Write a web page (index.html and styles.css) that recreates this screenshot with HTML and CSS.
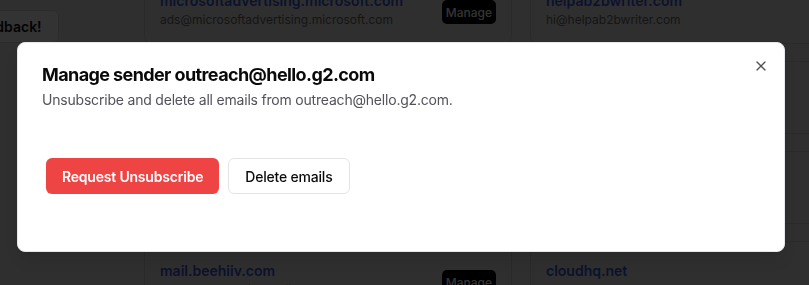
FILE: index.html
```html
<!DOCTYPE html>
<html lang="en">
<head>
<meta charset="utf-8">
<title>Manage sender</title>
<link rel="stylesheet" href="styles.css">
</head>
<body>
<div class="page">
  <button class="feedback">Feedback!</button>
  <div class="grid">
    <div class="card">
      <div class="info">
        <div class="domain">microsoftadvertising.microsoft.com</div>
        <div class="email">ads@microsoftadvertising.microsoft.com</div>
      </div>
      <button class="manage">Manage</button>
    </div>
    <div class="card">
      <div class="info">
        <div class="domain">helpab2bwriter.com</div>
        <div class="email">hi@helpab2bwriter.com</div>
      </div>
      <button class="manage">Manage</button>
    </div>
    <div class="card">
      <div class="info">
        <div class="domain">news.example.com</div>
        <div class="email">hello@news.example.com</div>
      </div>
      <button class="manage">Manage</button>
    </div>
    <div class="card">
      <div class="info">
        <div class="domain">updates.example.org</div>
        <div class="email">team@updates.example.org</div>
      </div>
      <button class="manage">Manage</button>
    </div>
    <div class="card">
      <div class="info">
        <div class="domain">hello.g2.com</div>
        <div class="email">outreach@hello.g2.com</div>
      </div>
      <button class="manage">Manage</button>
    </div>
    <div class="card">
      <div class="info">
        <div class="domain">mailer.example.net</div>
        <div class="email">info@mailer.example.net</div>
      </div>
      <button class="manage">Manage</button>
    </div>
    <div class="card">
      <div class="info">
        <div class="domain">mail.beehiiv.com</div>
        <div class="email">newsletter@mail.beehiiv.com</div>
      </div>
      <button class="manage">Manage</button>
    </div>
    <div class="card">
      <div class="info">
        <div class="domain">cloudhq.net</div>
        <div class="email">support@cloudhq.net</div>
      </div>
      <button class="manage">Manage</button>
    </div>
  </div>
</div>

<div class="overlay"></div>

<div class="dialog" role="dialog">
  <div class="header">
    <h2 class="title">Manage sender outreach@hello.g2.com</h2>
    <p class="desc">Unsubscribe and delete all emails from outreach@hello.g2.com.</p>
  </div>
  <div class="actions">
    <button class="btn btn-red">Request Unsubscribe</button>
    <button class="btn btn-outline">Delete emails</button>
  </div>
  <button class="close" aria-label="Close">
    <svg width="16" height="16" viewBox="0 0 24 24" fill="none" stroke="currentColor" stroke-width="2" stroke-linecap="round" stroke-linejoin="round"><path d="M18 6 6 18"/><path d="m6 6 12 12"/></svg>
  </button>
</div>
</body>
</html>
```
FILE: styles.css
```css
* { box-sizing: border-box; }
html, body {
  margin: 0;
  padding: 0;
}
body {
  width: 809px;
  height: 285px;
  overflow: hidden;
  background: #ececec;
  font-family: Inter, "Liberation Sans", sans-serif;
  color: #0a0a0a;
}
button { font-family: inherit; cursor: pointer; }

.page {
  position: relative;
  height: 285px;
  padding-left: 144px;
}
.feedback {
  position: fixed;
  left: -46px;
  top: 10px;
  height: 33px;
  padding: 0 16px;
  border: 1px solid #d4d4d4;
  border-radius: 6px;
  background: #ffffff;
  color: #111;
  font-size: 14px;
  font-weight: 600;
}
.grid {
  margin-top: -29px;
  display: grid;
  grid-template-columns: 368px 368px;
  column-gap: 18px;
  row-gap: 17px;
  width: 760px;
}
.card {
  height: 73px;
  border: 1px solid #d0d0d0;
  border-radius: 8px;
  padding: 19px 15px 15px;
  display: flex;
  justify-content: space-between;
  align-items: flex-start;
}
.domain {
  font-size: 14px;
  line-height: 20px;
  font-weight: 600;
  color: #3b5bdb;
  white-space: nowrap;
}
.email {
  font-size: 12px;
  line-height: 17px;
  color: #6b6b6b;
  white-space: nowrap;
}
.manage {
  margin-top: 9px;
  height: 24px;
  padding: 0 4px;
  border: none;
  border-radius: 5px;
  background: #000;
  color: #fff;
  font-size: 12px;
  font-weight: 500;
}

.overlay {
  position: fixed;
  inset: 0;
  background: rgba(0, 0, 0, 0.8);
}

.dialog {
  position: fixed;
  left: 17px;
  top: 42px;
  width: 768px;
  background: #fff;
  border: 1px solid #e5e7eb;
  border-radius: 8px;
  padding: 23px 24px 25px;
  display: grid;
  gap: 16px;
  box-shadow: 0 10px 15px -3px rgba(0,0,0,0.1), 0 4px 6px -4px rgba(0,0,0,0.1);
}
.header {
  display: flex;
  flex-direction: column;
  gap: 6px;
}
.title {
  margin: 0;
  font-size: 18px;
  line-height: 18px;
  font-weight: 700;
  letter-spacing: -0.6px;
  color: #0a0a0a;
}
.desc {
  margin: 0;
  font-size: 14px;
  line-height: 20px;
  letter-spacing: -0.2px;
  color: #52525b;
}
.actions {
  padding: 32px 4px;
  display: flex;
  gap: 9px;
}
.btn {
  height: 36px;
  padding: 0 16px;
  border-radius: 6px;
  font-size: 14px;
  font-weight: 500;
  letter-spacing: -0.2px;
}
.btn-red {
  background: #ef4444;
  color: #fff;
  border: none;
  font-weight: 600;
}
.btn-outline {
  background: #fff;
  color: #0a0a0a;
  border: 1px solid #e4e4e7;
}
.close {
  position: absolute;
  right: 15px;
  top: 15px;
  width: 16px;
  height: 16px;
  padding: 0;
  border: none;
  background: none;
  color: #0a0a0a;
  opacity: 0.7;
  display: flex;
}
```
